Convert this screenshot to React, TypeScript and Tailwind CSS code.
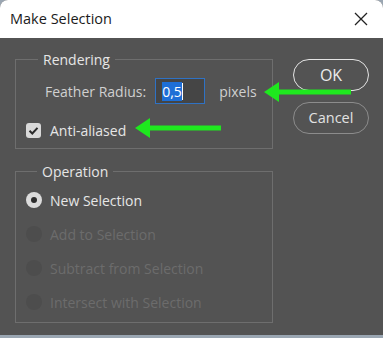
import React from "react";

function Arrow({ className, width }: { className: string; width: number }) {
  return (
    <svg
      className={className}
      width={width}
      height={22}
      viewBox={`0 0 ${width} 22`}
      fill="none"
    >
      <polygon points={`0,11 15,1 15,21`} fill="#1ee81e" />
      <rect x={12} y={8.5} width={width - 12} height={5} fill="#1ee81e" />
    </svg>
  );
}

function Radio({ label, checked, disabled }: { label: string; checked?: boolean; disabled?: boolean }) {
  return (
    <div className="flex h-[34px] items-center">
      <div
        className={
          checked
            ? "flex h-[16px] w-[16px] items-center justify-center rounded-full bg-[#dcdcdc]"
            : "h-[16px] w-[16px] rounded-full bg-[#4d4d4d]"
        }
      >
        {checked && <div className="h-[6px] w-[6px] rounded-full bg-[#2e2e2e]" />}
      </div>
      <span className={disabled ? "ml-[8px] text-[#6c6c6c]" : "ml-[8px] text-[#e6e6e6]"}>{label}</span>
    </div>
  );
}

export default function App() {
  return (
    <div
      className="h-[338px] w-[383px] overflow-hidden bg-[#9aa6b2]"
      style={{ fontFamily: '"Open Sans", "Noto Sans", sans-serif' }}
    >
      <div className="flex h-[335px] flex-col overflow-hidden rounded-t-[8px] bg-[#535353]">
        <div className="flex h-[38px] shrink-0 items-center justify-between bg-white pl-[10px] pr-[14px]">
          <span className="text-[14.5px] text-[#1b1b1b]">Make Selection</span>
          <svg width="14" height="14" viewBox="0 0 14 14" className="mr-[1px]">
            <path d="M1 1 L13 13 M13 1 L1 13" stroke="#222" strokeWidth="1.3" />
          </svg>
        </div>

        <div className="relative flex pl-[15px] pt-[21px] text-[14px]">
          <div className="flex w-[258px] flex-col">
            {/* Rendering */}
            <div className="relative h-[90px] border border-[#6e6e6e] pl-[10px] pt-[18px]">
              <span className="absolute -top-[11px] left-[22px] bg-[#535353] px-[5px] text-[#e6e6e6]">Rendering</span>
              <div className="flex h-[26px] items-center">
                <span className="ml-[19px] text-[#d0d0d0]">Feather Radius:</span>
                <div className="ml-[9px] flex h-[26px] w-[50px] items-center border border-[#2f72c4] bg-[#454545] pl-[6px]">
                  <span className="bg-[#1e6fd6] text-white leading-[19px]">0,5</span>
                  <span className="h-[17px] w-[1px] bg-white" />
                </div>
                <span className="ml-[14px] text-[#d0d0d0]">pixels</span>
              </div>
              <div className="mt-[16px] flex items-center">
                <div className="flex h-[15px] w-[15px] items-center justify-center rounded-[3px] bg-[#d9d9d9]">
                  <svg width="11" height="11" viewBox="0 0 11 11">
                    <path d="M1.5 5.8 L4.3 8.5 L9.5 2.8" stroke="#2b2b2b" strokeWidth="2" fill="none" />
                  </svg>
                </div>
                <span className="ml-[9px] text-[#e6e6e6]">Anti-aliased</span>
              </div>
            </div>

            {/* Operation */}
            <div className="relative mt-[22px] h-[152px] border border-[#6e6e6e] pl-[10px] pt-[11px]">
              <span className="absolute -top-[11px] left-[21px] bg-[#535353] px-[5px] text-[#e6e6e6]">Operation</span>
              <Radio label="New Selection" checked />
              <Radio label="Add to Selection" disabled />
              <Radio label="Subtract from Selection" disabled />
              <Radio label="Intersect with Selection" disabled />
            </div>
          </div>

          <div className="ml-[20px] flex w-[76px] flex-col">
            <button className="h-[32px] rounded-full border-[1.5px] border-[#e4e4e4] text-[16px] text-[#ececec]">OK</button>
            <button className="mt-[11px] h-[32px] rounded-full border-[1.5px] border-[#8c8c8c] text-[14.5px] text-[#e2e2e2]">Cancel</button>
          </div>

          <Arrow className="absolute left-[264px] top-[43px]" width={87} />
          <Arrow className="absolute left-[135px] top-[79px]" width={86} />
        </div>
      </div>
    </div>
  );
}
